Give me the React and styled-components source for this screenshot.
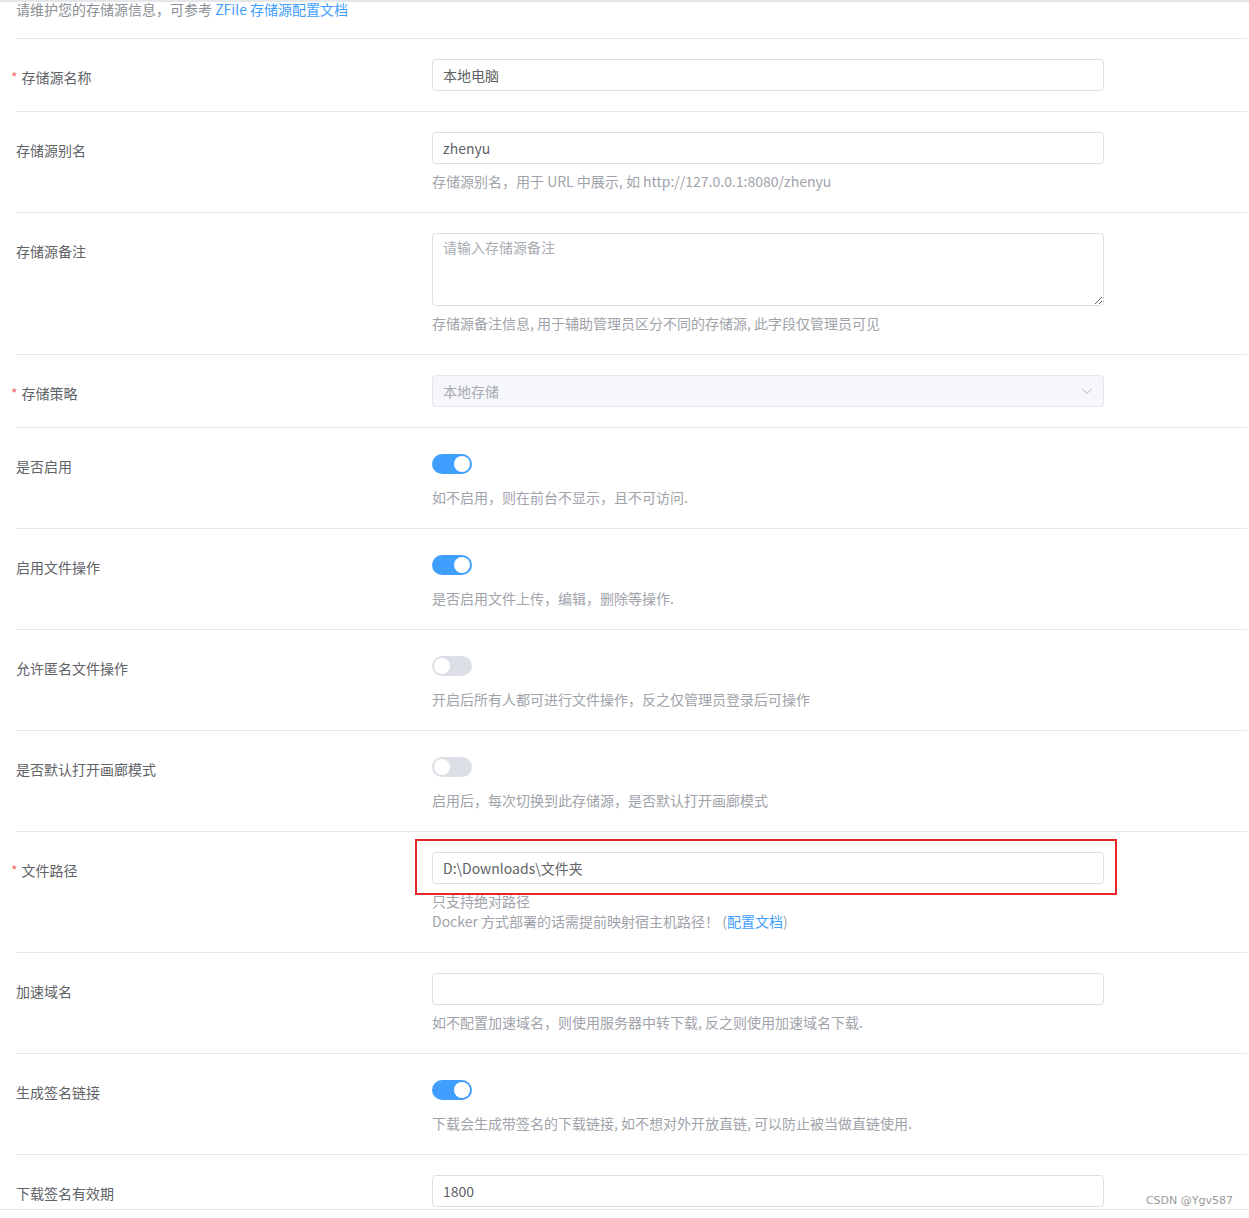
import styled, { createGlobalStyle } from 'styled-components';

const GlobalStyle = createGlobalStyle`
    html, body {
        margin: 0;
        padding: 0;
        background: #ffffff;
    }
    body {
        font-family: "Noto Sans CJK SC", "Noto Sans", sans-serif;
        font-size: 14px;
        color: #606266;
    }
`;

const Frame = styled.div`
    position: relative;
    height: 1207px;
    overflow: hidden;
    border-top: 2px solid #e4e6ea;
    border-bottom: 1px solid #e4e6ea;
`;

const Intro = styled.div`
    margin: 0 2px 0 16px;
    height: 36px;
    line-height: 15px;
    color: #8c8f96;
    border-bottom: 1px solid #e6e8eb;
`;

const Link = styled.a`
    color: #409eff;
    text-decoration: none;
`;

const Form = styled.div`
    margin: 0 2px 0 16px;
`;

const Row = styled.div`
    display: flex;
    padding: 20px 0;
    border-bottom: 1px solid #e6e8eb;
`;

const Label = styled.div`
    width: 416px;
    flex-shrink: 0;
    height: 32px;
    line-height: 37px;
    color: #606266;
`;

const Star = styled.span`
    color: #f56c6c;
    margin-left: -5px;
    margin-right: 4px;
`;

const Field = styled.div`
    width: 672px;
`;

const InputBox = styled.div`
    position: relative;
`;

const Input = styled.div`
    box-sizing: border-box;
    height: 32px;
    line-height: 30px;
    padding: 0 10px;
    border: 1px solid #dcdfe6;
    border-radius: 4px;
    background: ${p => (p.$disabled ? '#f5f7fa' : '#ffffff')};
    border-color: ${p => (p.$disabled ? '#e4e7ed' : '#dcdfe6')};
    color: ${p => (p.$disabled ? '#a8abb2' : '#606266')};
    display: flex;
    align-items: center;
    justify-content: space-between;
`;

const TextArea = styled.textarea`
    display: block;
    box-sizing: border-box;
    width: 672px;
    height: 73px;
    padding: 3px 10px;
    border: 1px solid #dcdfe6;
    border-radius: 4px;
    font-family: inherit;
    font-size: 14px;
    line-height: 21px;
    color: #606266;
    resize: vertical;
    outline: none;
    &::placeholder {
        color: #a8abb2;
    }
`;

const Hint = styled.div`
    padding-top: 7px;
    line-height: 20px;
    height: ${p => (p.$lines || 1) * 20 + 1}px;
    color: #a0a3aa;
`;

const SwitchWrap = styled.div`
    height: 32px;
    display: flex;
    align-items: center;
`;

const Switch = styled.span`
    position: relative;
    width: 40px;
    height: 20px;
    border-radius: 10px;
    background: ${p => (p.$on ? '#409eff' : '#dcdfe6')};
    &::after {
        content: '';
        position: absolute;
        top: 2px;
        left: ${p => (p.$on ? '22px' : '2px')};
        width: 16px;
        height: 16px;
        border-radius: 50%;
        background: #ffffff;
    }
`;

const Marker = styled.div`
    position: absolute;
    left: -17px;
    right: -13px;
    top: -13px;
    bottom: -11px;
    border: 2px solid #e5262b;
    pointer-events: none;
`;

const Watermark = styled.div`
    position: absolute;
    right: 16px;
    bottom: 2px;
    font-family: "DejaVu Sans", sans-serif;
    font-size: 11px;
    color: #9a9a9a;
`;

const Chevron = () => (
    <svg width="12" height="12" viewBox="0 0 12 12" fill="none">
        <path d="M1.5 4 L6 8.5 L10.5 4" stroke="#b4b7bd" strokeWidth="1" />
    </svg>
);

const FormLabel = ({ required, children }) => (
    <Label>
        {required && <Star>*</Star>}
        {children}
    </Label>
);

const switches = [
    { label: '是否启用', on: true, hint: '如不启用，则在前台不显示，且不可访问.' },
    { label: '启用文件操作', on: true, hint: '是否启用文件上传，编辑，删除等操作.' },
    { label: '允许匿名文件操作', on: false, hint: '开启后所有人都可进行文件操作，反之仅管理员登录后可操作' },
    { label: '是否默认打开画廊模式', on: false, hint: '启用后，每次切换到此存储源，是否默认打开画廊模式' },
];

const App = () => {
    return (
        <Frame>
            <GlobalStyle />
            <Intro>
                请维护您的存储源信息，可参考 <Link>ZFile 存储源配置文档</Link>
            </Intro>
            <Form>
                <Row>
                    <FormLabel required>存储源名称</FormLabel>
                    <Field>
                        <Input>本地电脑</Input>
                    </Field>
                </Row>
                <Row>
                    <FormLabel>存储源别名</FormLabel>
                    <Field>
                        <Input>zhenyu</Input>
                        <Hint>存储源别名，用于 URL 中展示, 如 http://127.0.0.1:8080/zhenyu</Hint>
                    </Field>
                </Row>
                <Row>
                    <FormLabel>存储源备注</FormLabel>
                    <Field>
                        <TextArea placeholder="请输入存储源备注" />
                        <Hint>存储源备注信息, 用于辅助管理员区分不同的存储源, 此字段仅管理员可见</Hint>
                    </Field>
                </Row>
                <Row>
                    <FormLabel required>存储策略</FormLabel>
                    <Field>
                        <Input $disabled>
                            本地存储
                            <Chevron />
                        </Input>
                    </Field>
                </Row>
                {switches.map(s => (
                    <Row key={s.label}>
                        <FormLabel>{s.label}</FormLabel>
                        <Field>
                            <SwitchWrap>
                                <Switch $on={s.on} />
                            </SwitchWrap>
                            <Hint>{s.hint}</Hint>
                        </Field>
                    </Row>
                ))}
                <Row>
                    <FormLabel required>文件路径</FormLabel>
                    <Field>
                        <InputBox>
                            <Input>D:\Downloads\文件夹</Input>
                            <Marker />
                        </InputBox>
                        <Hint $lines={2}>
                            只支持绝对路径
                            <br />
                            Docker 方式部署的话需提前映射宿主机路径！ (<Link>配置文档</Link>)
                        </Hint>
                    </Field>
                </Row>
                <Row>
                    <FormLabel>加速域名</FormLabel>
                    <Field>
                        <Input />
                        <Hint>如不配置加速域名，则使用服务器中转下载, 反之则使用加速域名下载.</Hint>
                    </Field>
                </Row>
                <Row>
                    <FormLabel>生成签名链接</FormLabel>
                    <Field>
                        <SwitchWrap>
                            <Switch $on />
                        </SwitchWrap>
                        <Hint>下载会生成带签名的下载链接, 如不想对外开放直链, 可以防止被当做直链使用.</Hint>
                    </Field>
                </Row>
                <Row>
                    <FormLabel>下载签名有效期</FormLabel>
                    <Field>
                        <Input>1800</Input>
                    </Field>
                </Row>
            </Form>
            <Watermark>CSDN @Ygv587</Watermark>
        </Frame>
    );
};

export default App;
